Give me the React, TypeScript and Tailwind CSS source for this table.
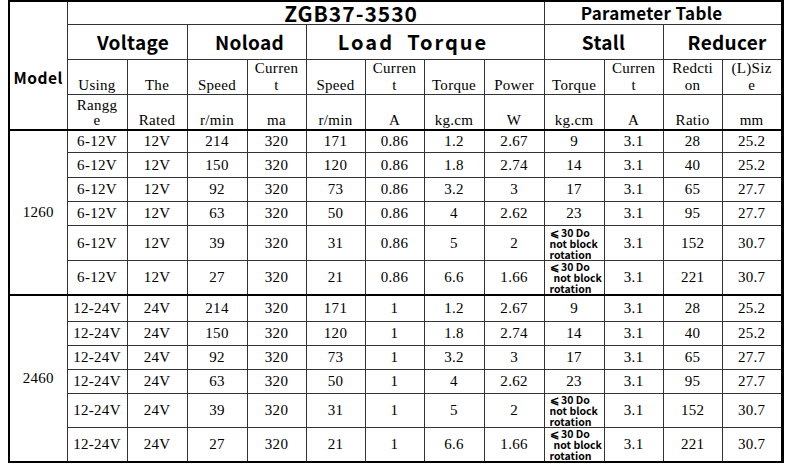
import React from "react";

const serif = "font-['Liberation_Serif',serif]";
const sans = "font-['Noto_Sans_CJK_SC','Noto_Sans',sans-serif]";
const line = "border border-[#333] text-center p-0";
const cell = `${line} align-middle`;
const big = `${cell} ${sans} font-bold text-[19px] leading-[22px]`;

type Row = {
  range: string;
  rated: string;
  nlSpeed: string;
  nlCur: string;
  ltSpeed: string;
  ltCur: string;
  torque: string;
  power: string;
  stall: string | null;
  ratio: string;
  size: string;
};

const speeds = [
  ["214", "171", "1.2", "2.67", "9", "28", "25.2"],
  ["150", "120", "1.8", "2.74", "14", "40", "25.2"],
  ["92", "73", "3.2", "3", "17", "65", "27.7"],
  ["63", "50", "4", "2.62", "23", "95", "27.7"],
  ["39", "31", "5", "2", null, "152", "30.7"],
  ["27", "21", "6.6", "1.66", null, "221", "30.7"],
];

function makeRows(range: string, rated: string, cur: string): Row[] {
  return speeds.map((s) => ({
    range,
    rated,
    nlSpeed: s[0] as string,
    nlCur: "320",
    ltSpeed: s[1] as string,
    ltCur: cur,
    torque: s[2] as string,
    power: s[3] as string,
    stall: s[4],
    ratio: s[5] as string,
    size: s[6] as string,
  }));
}

const groups = [
  { model: "1260", rows: makeRows("6-12V", "12V", "0.86"), heights: ["h-[23px]", "h-[25px]", "h-[24px]", "h-[24px]", "h-[35px]", "h-[32px]"] },
  { model: "2460", rows: makeRows("12-24V", "24V", "1"), heights: ["h-[26px]", "h-[24px]", "h-[24px]", "h-[24px]", "h-[34px]", "h-[35px]"] },
];

function StallNote({ last }: { last: boolean }) {
  return (
    <div className={`${sans} font-bold text-[10.5px] leading-[11px] tracking-normal text-black text-left pl-[5px] whitespace-pre`}>
      <div>⩽ 30 Do</div>
      <div className={last ? "pl-[4px]" : ""}>not block</div>
      <div>rotation</div>
    </div>
  );
}

export default function App() {
  const widths = [58, 60, 60, 60, 59, 59, 59, 60, 60, 60, 59, 59, 60];

  return (
    <div className="w-[790px] h-[465px] bg-white pl-[8px] pt-0 overflow-hidden">
      <table className={`table-fixed border-collapse w-[775px] border-2 border-black border-r-[3px] ${serif} text-[15px] leading-[17px] text-black tracking-[0.3px]`}>
        <colgroup>
          {widths.map((w, i) => (
            <col key={i} style={{ width: w }} />
          ))}
        </colgroup>
        <thead>
          <tr className="h-[23px]">
            <th rowSpan={4} className={`${cell} ${sans} font-bold text-[15.5px] leading-[20px] tracking-[0.5px] pt-[24px]`}>Model</th>
            <th colSpan={8} className={`${cell} ${sans} font-bold text-[21px] leading-[22px] tracking-[1px] pl-[91px]`}>ZGB37-3530</th>
            <th colSpan={4} className={`${cell} ${sans} font-bold text-[17px] leading-[22px] pr-[22px]`}>Parameter Table</th>
          </tr>
          <tr className="h-[35px]">
            <th colSpan={2} className={`${big} pl-[12px]`}>Voltage</th>
            <th colSpan={2} className={`${big} pl-[6px]`}>Noload</th>
            <th colSpan={4} className={`${big} text-[20px] tracking-[2px] whitespace-pre pr-[24px]`}>Load  Torque</th>
            <th colSpan={2} className={big}>Stall</th>
            <th colSpan={2} className={`${big} pl-[10px]`}>Reducer</th>
          </tr>
          <tr className="h-[35px]">
            {["Using", "The", "Speed", "Curren|t", "Speed", "Curren|t", "Torque", "Power", "Torque", "Curren|t", "Redcti|on", "(L)Siz|e"].map((t, i) => (
              <th key={i} className={`${line} align-bottom font-normal pb-0 leading-[17px]`}>
                {t.split("|").map((p, j) => (
                  <div key={j}>{p}</div>
                ))}
              </th>
            ))}
          </tr>
          <tr className="h-[35px]">
            {["Rangg|e", "Rated", "r/min", "ma", "r/min", "A", "kg.cm", "W", "kg.cm", "A", "Ratio", "mm"].map((t, i) => (
              <th key={i} className={`${line} align-bottom font-normal pb-[1px] leading-[15px]`}>
                {t.split("|").map((p, j) => (
                  <div key={j}>{p}</div>
                ))}
              </th>
            ))}
          </tr>
        </thead>
        <tbody>
          {groups.map((g) =>
            g.rows.map((r, i) => {
              const top = i === 0 ? "border-t-2 border-t-black" : "";
              return (
                <tr key={g.model + i} className={g.heights[i]}>
                  {i === 0 && (
                    <td rowSpan={6} className={`${cell} ${top}`}>
                      {g.model}
                    </td>
                  )}
                  <td className={`${cell} ${top}`}>{r.range}</td>
                  <td className={`${cell} ${top}`}>{r.rated}</td>
                  <td className={`${cell} ${top}`}>{r.nlSpeed}</td>
                  <td className={`${cell} ${top}`}>{r.nlCur}</td>
                  <td className={`${cell} ${top}`}>{r.ltSpeed}</td>
                  <td className={`${cell} ${top}`}>{r.ltCur}</td>
                  <td className={`${cell} ${top}`}>{r.torque}</td>
                  <td className={`${cell} ${top}`}>{r.power}</td>
                  <td className={`${cell} ${top} overflow-hidden`}>{r.stall ?? <StallNote last={i === 5} />}</td>
                  <td className={`${cell} ${top}`}>3.1</td>
                  <td className={`${cell} ${top}`}>{r.ratio}</td>
                  <td className={`${cell} ${top}`}>{r.size}</td>
                </tr>
              );
            })
          )}
        </tbody>
      </table>
    </div>
  );
}
